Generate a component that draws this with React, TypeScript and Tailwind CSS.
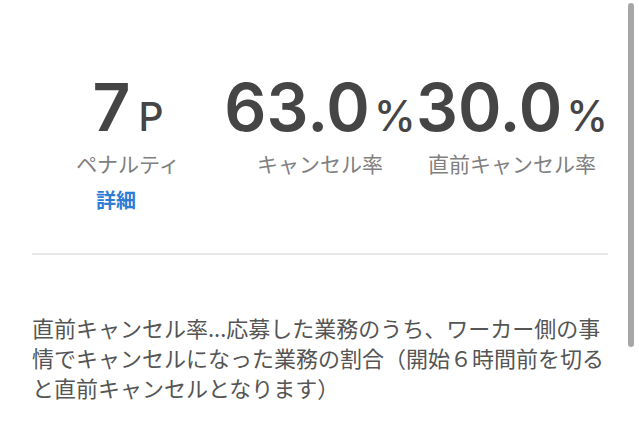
import React from "react";

const jp = { fontFamily: '"Noto Sans CJK JP", "Noto Sans", sans-serif' };
const num = { fontFamily: 'Inter, "Liberation Sans", sans-serif' };

function Stat({ value, unit, label, unitGap, children }: { value: string; unit: string; label: string; unitGap: string; children?: React.ReactNode }) {
  return (
    <div className="flex flex-col items-center">
      <div className="flex items-baseline h-[66px] text-[#454545]" style={num}>
        <span className="text-[66px] leading-none font-semibold tracking-[0px]">{value}</span>
        <span className={`${unitGap} leading-none font-medium`}>{unit}</span>
      </div>
      <div className="mt-2 text-[21px] leading-[30px] text-[#808080]" style={jp}>
        {label}
      </div>
      {children}
    </div>
  );
}

export default function App() {
  return (
    <div className="relative w-[639px] h-[426px] bg-white overflow-hidden">
      <div className="w-[576px] ml-8 pt-[74px]">
        <div className="grid grid-cols-3">
          <Stat value="7" unit="P" label="ペナルティ" unitGap="ml-2 text-[39px]">
            <div className="mt-[7px] mr-6 text-[20px] leading-[30px] font-bold text-[#2e7cd6]" style={jp}>
              詳細
            </div>
          </Stat>
          <Stat value="63.0" unit="%" label="キャンセル率" unitGap="ml-1 text-[42px]" />
          <Stat value="30.0" unit="%" label="直前キャンセル率" unitGap="ml-1 text-[42px]" />
        </div>
        <div className="mt-[38px] h-[2px] bg-[#e8e8e8]" />
        <p className="mt-[57px] text-[22px] leading-[30px] text-[#555555]" style={jp}>
          直前キャンセル率...応募した業務のうち、ワーカー側の事情でキャンセルになった業務の割合（開始６時間前を切ると直前キャンセルとなります）
        </p>
      </div>
      <div className="absolute left-[628px] top-[3px] w-[6px] h-[344px] rounded-full bg-[#a6a6a6]" />
    </div>
  );
}
